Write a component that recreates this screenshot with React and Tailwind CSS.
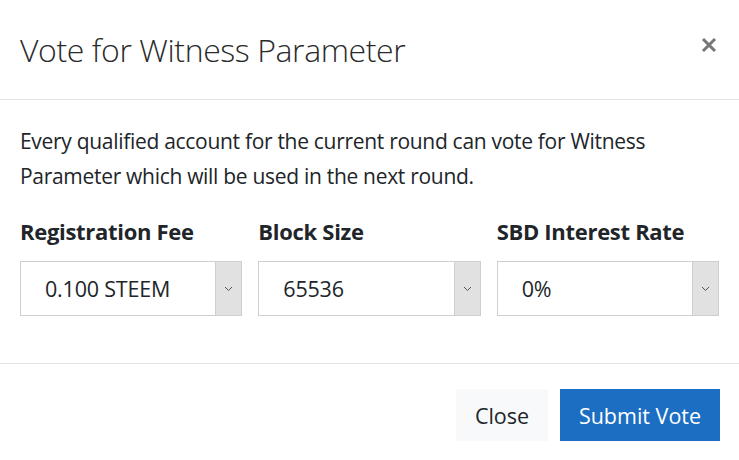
import { useState } from 'react';

const font = { fontFamily: '"Open Sans", "Noto Sans", sans-serif' };

function Select({ value }) {
  return (
    <div className="flex h-[55px] border border-[#cfcfcf] bg-white">
      <div className="flex-1 flex items-center pl-[24px] pt-[1px] text-[21.5px] text-[#212529] tracking-[-0.2px]">{value}</div>
      <div className="w-[26px] flex items-center justify-center bg-[#e1e1e1] border-l border-[#cfcfcf]">
        <svg width="9" height="6" viewBox="0 0 9 6" fill="none">
          <path d="M1 1l3.5 3.5L8 1" stroke="#555" strokeWidth="1" />
        </svg>
      </div>
    </div>
  );
}

export default function App() {
  const [fee] = useState('0.100 STEEM');
  const [size] = useState('65536');
  const [rate] = useState('0%');

  return (
    <div className="w-[739px] h-[460px] bg-white text-[#212529]" style={font}>
      {/* header */}
      <div className="h-[100px] flex items-center justify-between pl-[20px] pr-[22px] border-b border-[#e5e5e5]">
        <h1 className="text-[32px] font-light tracking-[-0.4px] text-[#2a2a2a]">Vote for Witness Parameter</h1>
        <button className="-mt-[10px]">
          <svg width="16" height="16" viewBox="0 0 16 16">
            <path d="M2 2l12 12M14 2L2 14" stroke="#777" strokeWidth="3" />
          </svg>
        </button>
      </div>

      {/* body */}
      <div className="px-[20px] pt-[24px] h-[264px] border-b border-[#e5e5e5]">
        <p className="text-[21px] leading-[35px] tracking-[-0.3px]">
          Every qualified account for the current round can vote for Witness Parameter which will be used in the next round.
        </p>
        <div className="grid grid-cols-3 gap-[16px] mt-[21px]">
          <div>
            <div className="text-[22px] font-bold mb-[13px] tracking-[-0.3px]">Registration Fee</div>
            <Select value={fee} />
          </div>
          <div>
            <div className="text-[22px] font-bold mb-[13px] tracking-[-0.3px]">Block Size</div>
            <Select value={size} />
          </div>
          <div>
            <div className="text-[22px] font-bold mb-[13px] tracking-[-0.3px]">SBD Interest Rate</div>
            <Select value={rate} />
          </div>
        </div>
      </div>

      {/* footer */}
      <div className="flex justify-end gap-[12px] pr-[19px] pt-[25px]">
        <button className="h-[52px] w-[92px] pt-[3px] bg-[#f8f9fa] text-[21.5px] text-[#212529]">Close</button>
        <button className="h-[52px] w-[160px] pt-[3px] bg-[#1b6ec2] text-[21.5px] text-white">Submit Vote</button>
      </div>
    </div>
  );
}
